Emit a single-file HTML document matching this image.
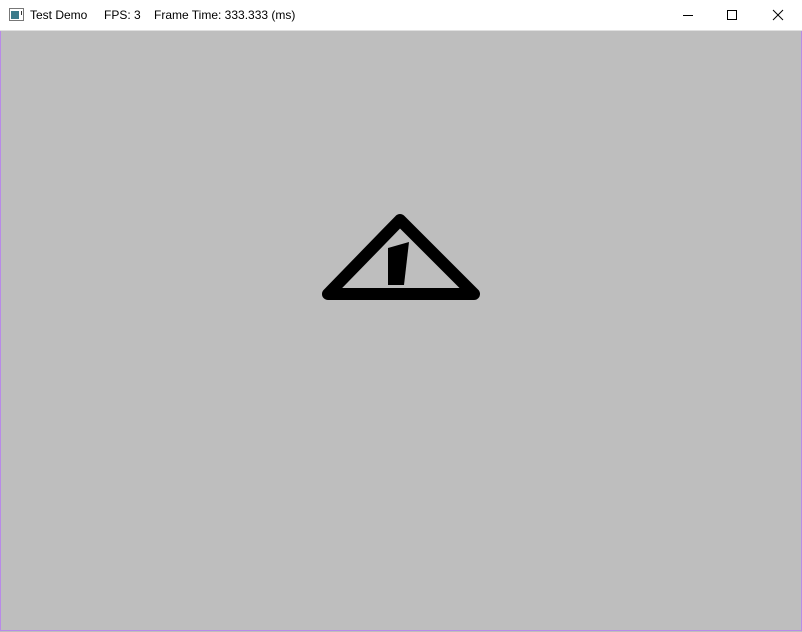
<!DOCTYPE html>
<html><head><meta charset="utf-8"><style>
html,body{margin:0;padding:0;width:802px;height:632px;overflow:hidden;background:#bebebe;font-family:"Liberation Sans","Noto Sans CJK KR",sans-serif}
.win{position:absolute;left:0;top:0;width:800px;height:630px;border:1px solid #b98ae8;border-top:none;background:#bebebe}
.title{position:absolute;left:0;top:0;width:802px;height:30px;background:#fff;border-bottom:1px solid #e0e0e0;font-size:12px;color:#000}
.title span{position:absolute;top:8px}
</style></head><body>
<div class="win"></div>
<div class="title">
<svg style="position:absolute;left:9px;top:8px" width="16" height="14"><rect x="0.5" y="0.5" width="14" height="12" fill="#fff" stroke="#777"/><rect x="2" y="3" width="8" height="8" fill="#3a7a8a"/><rect x="12" y="3" width="1" height="4" fill="#333"/></svg>
<span style="left:30px">Test Demo</span>
<span style="left:104px">FPS: 3</span>
<span style="left:154px">Frame Time: 333.333 (ms)</span>
<svg style="position:absolute;left:680px;top:8px" width="110" height="16">
<line x1="3" y1="7.5" x2="13" y2="7.5" stroke="#000"/>
<rect x="47.5" y="2.5" width="9" height="9" fill="none" stroke="#000"/>
<line x1="93" y1="2" x2="103" y2="12" stroke="#000"/><line x1="103" y1="2" x2="93" y2="12" stroke="#000"/>
</svg>
</div>
<svg style="position:absolute;left:0;top:0" width="802" height="632">
<polygon points="400,220 328,294 474,294" fill="none" stroke="#000" stroke-width="12" stroke-linejoin="round"/>
<polygon points="388,248 409,242 404,285 388,285" fill="#000"/>
</svg>
</body></html>
